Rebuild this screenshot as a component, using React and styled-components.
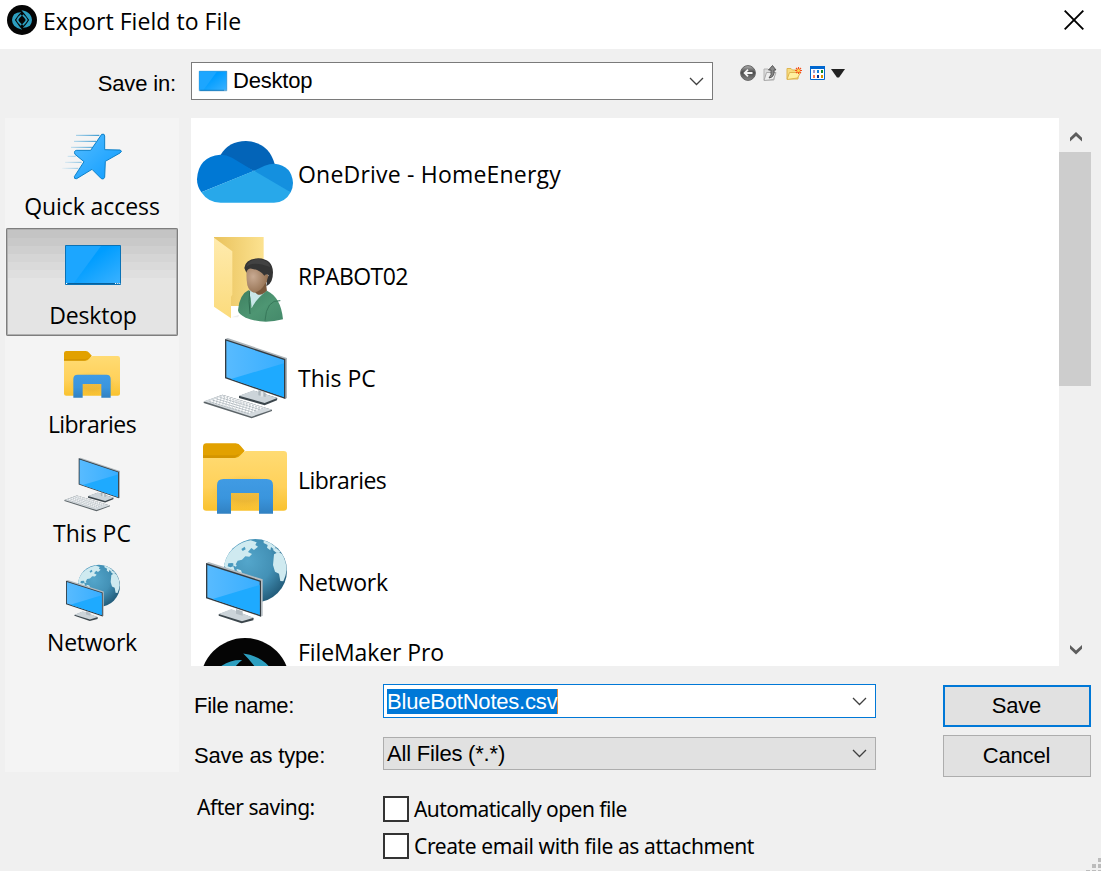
import React from "react";
import styled, { createGlobalStyle, css } from "styled-components";

const GlobalStyle = createGlobalStyle`
  * { box-sizing: border-box; }
  body { margin: 0; background: #f0f0f0; color: #000; }
  svg { display: block; flex: none; overflow: visible; }
`;

const segoe = css`
  font-family: "Open Sans", "Noto Sans", sans-serif;
  font-size: 23px;
  line-height: 32px;
  white-space: nowrap;
`;
const tahoma = css`
  font-family: "Noto Sans", "Open Sans", sans-serif;
  font-size: 21px;
  line-height: 28px;
  white-space: nowrap;
`;
const sans = css`
  font-family: "Liberation Sans", Arial, sans-serif;
  font-size: 22px;
  line-height: 26px;
  white-space: nowrap;
`;

const Dialog = styled.div`
  width: 1101px;
  height: 871px;
  display: flex;
  flex-direction: column;
  background: #f0f0f0;
  overflow: hidden;
`;
const TitleBar = styled.header`
  height: 49px;
  flex: none;
  display: flex;
  align-items: flex-start;
  padding: 5px 17px 0 7px;
  background: #fff;
`;
const Title = styled.h1`
  ${segoe}
  flex: 1;
  margin: 0 0 0 6px;
  font-weight: 400;
  letter-spacing: ${(p) => p.$track}px;
`;
const CloseButton = styled.button`
  border: 0;
  padding: 5px 0 0;
  background: none;
`;
const TopRow = styled.div`
  height: 69px;
  flex: none;
  display: flex;
  align-items: flex-start;
  padding-top: 13px;
`;
const SaveInLabel = styled.label`
  ${sans}
  width: 191px;
  padding: 9px 15px 0 0;
  text-align: right;
  letter-spacing: ${(p) => p.$track}px;
`;
const Combo = styled.div`
  ${sans}
  display: flex;
  align-items: center;
  width: ${(p) => p.$width}px;
  height: ${(p) => p.$height}px;
  padding: 0 8px 0 ${(p) => p.$inset}px;
  border: 1px solid ${(p) => p.$border};
  background: ${(p) => p.$fill || "#fff"};
`;
const ComboText = styled.span`
  flex: 1;
  margin-left: ${(p) => p.$gap || 0}px;
  letter-spacing: ${(p) => p.$track || 0}px;
`;
const Selected = styled.span`
  display: block;
  width: max-content;
  height: 25px;
  line-height: 26px;
  background: #0078d7;
  color: #fff;
  border-right: 1px solid #e08a3c;
`;
const Toolbar = styled.div`
  display: flex;
  align-items: center;
  gap: 7px;
  margin: 3px 0 0 27px;
`;
const Content = styled.div`
  flex: 1;
  display: flex;
  gap: 12px;
  padding: 0 10px 0 5px;
`;
const Places = styled.nav`
  width: 174px;
  height: 654px;
  padding: 1px 1px 0;
  background: #f4f4f4;
`;
const Place = styled.button`
  ${segoe}
  width: 172px;
  height: ${(p) => (p.$active ? 108 : 109)}px;
  margin-bottom: ${(p) => (p.$active ? 1 : 0)}px;
  display: flex;
  flex-direction: column;
  align-items: center;
  padding: 9px 0 0;
  border: 0;
  background: none;
  color: #000;
  letter-spacing: ${(p) => p.$track}px;
  ${(p) =>
    p.$active &&
    css`
      background: linear-gradient(
        #c4c4c4 10px, #c9c9c9 10px 18px, #cfcfcf 18px 26px, #d5d5d5 26px 34px,
        #dadada 34px 42px, #dfdfdf 42px 50px, #e4e4e4 50px
      );
      box-shadow: inset 0 0 0 1px #7e7e7e, inset 0 0 0 2px #b0b0b0;
      border-radius: 2px;
    `}
`;
const PlaceLabel = styled.span`
  margin-top: 6px;
  padding-left: ${(p) => (p.$active ? 2 : 0)}px;
`;
const Main = styled.main`
  width: 900px;
  display: flex;
  flex-direction: column;
`;
const Browser = styled.section`
  display: flex;
  height: 548px;
`;
const FileList = styled.ul`
  flex: 1;
  height: 548px;
  margin: 0;
  padding: 6px 0 0 6px;
  list-style: none;
  background: #fff;
  overflow: hidden;
`;
const FileRow = styled.li`
  ${segoe}
  display: flex;
  align-items: ${(p) => (p.$top ? "flex-start" : "center")};
  height: 96px;
  margin-bottom: 6px;
  gap: 5px;
  letter-spacing: ${(p) => p.$track}px;
`;
const FileName = styled.span`
  padding-top: ${(p) => (p.$top ? 5 : 4)}px;
  line-height: ${(p) => (p.$top ? 26 : 32)}px;
`;
const Scrollbar = styled.div`
  width: 32px;
  display: flex;
  flex-direction: column;
  background: #f0f0f0;
`;
const ScrollButton = styled.div`
  width: 32px;
  height: 34px;
  display: flex;
  align-items: center;
  justify-content: center;
  padding: ${(p) => p.$shift || 0}px 0 0 1px;
`;
const ScrollThumb = styled.div`
  width: 32px;
  height: 234px;
  margin-bottom: auto;
  background: #cdcdcd;
`;
const Form = styled.form`
  display: flex;
  justify-content: space-between;
  padding-top: 18px;
`;
const Fields = styled.div`
  display: flex;
  flex-direction: column;
`;
const Field = styled.div`
  display: flex;
  align-items: flex-start;
  margin-bottom: ${(p) => p.$after}px;
`;
const FieldLabel = styled.label`
  ${(p) => (p.$soft ? tahoma : sans)}
  width: 192px;
  padding: ${(p) => p.$drop}px 0 0 ${(p) => (p.$soft ? 6 : 3)}px;
  letter-spacing: ${(p) => p.$track}px;
`;
const SoftLabel = styled(FieldLabel)`
  margin-top: -3px;
`;
const Options = styled.div`
  display: flex;
  flex-direction: column;
  gap: 11px;
`;
const Option = styled.label`
  ${tahoma}
  height: 26px;
  display: flex;
  align-items: center;
  gap: 5px;
  letter-spacing: ${(p) => p.$track}px;
`;
const Check = styled.span`
  width: 26px;
  height: 26px;
  border: 2px solid #333;
  background: #fff;
`;
const Actions = styled.div`
  display: flex;
  flex-direction: column;
  gap: 8px;
  padding-top: 1px;
`;
const ActionButton = styled.button`
  ${sans}
  width: 148px;
  height: 42px;
  padding: 0 1px 0 0;
  border: ${(p) => (p.$primary ? "2px solid #0078d7" : "1px solid #adadad")};
  background: #e1e1e1;
  color: #000;
  letter-spacing: -0.2px;
`;
const Grip = styled.div`
  position: absolute;
  left: 1086px;
  top: 858px;
`;

const Chevron = () => (
  <svg width="15" height="9" viewBox="0 0 15 9">
    <path d="M1 1l6.5 6.5L14 1" fill="none" stroke="#404040" strokeWidth="1.3" />
  </svg>
);

const ScrollArrow = ({ down }) => (
  <svg width="12" height="10" viewBox="0 0 12 10">
    <path d={down ? "M0 0l6 5.5L12 0v3.8L6 9.6 0 3.8z" : "M0 9.6L6 4l6 5.6V5.8L6 0 0 5.8z"} fill="#5d5d5d" />
  </svg>
);

const Icon = ({ y, compact, children }) => (
  <svg
    width={compact ? 56 : 96}
    height={compact ? 56 : 96}
    viewBox={compact ? `39 ${y + 18} 252 252` : `21 ${y} 288 288`}
  >
    {children}
  </svg>
);

const LogoMark = () => (
  <>
    <circle r="126" fill="#050505" />
    <g fill="#2d9fc0">
      <path d="M-66-48Q-38-66-8-64Q-26-52-60 0Q-26 52 2 82Q-38 76-66 48Q-84 24-84 0Q-84-24-66-48z" />
      <path d="M-5-82Q40-76 66-48Q84-24 84 0Q84 24 66 48Q38 66 8 64Q26 52 60 0Q26-52-5-82z" />
    </g>
    <path d="M-6-42Q-26-26-40 0Q-26 26-6 42M6-42Q26-26 40 0Q26 26 6 42" fill="none" stroke="#2d9fc0" strokeWidth="14" />
  </>
);

const FileMakerIcon = () => (
  <Icon y={327}>
    <g transform="translate(165 473) scale(1.063)">
      <LogoMark />
    </g>
  </Icon>
);

const OneDriveIcon = () => (
  <Icon y={12}>
    <path d="M91 106Q116 63 168 63Q236 66 254 132L192 153L120 120z" fill="#0364b8" />
    <path d="M34 217Q21 200 21 178Q24 110 91 104Q110 104 126 113L192 153z" fill="#0078d4" />
    <path d="M192 152L224 137Q238 131 254 131Q306 137 309 189Q309 203 302 217L240 200z" fill="#1490df" />
    <path d="M192 152L302 217Q286 248 252 248H92Q54 248 34 217z" fill="#28a8ea" />
  </Icon>
);

const UserFolderIcon = () => (
  <Icon y={318}>
    <defs>
      <linearGradient id="ufBack" x1="0" y1="0" x2="1" y2="0">
        <stop offset="0" stopColor="#e9c25c" />
        <stop offset="1" stopColor="#fce290" />
      </linearGradient>
      <linearGradient id="ufFront" x1="0" y1="0" x2="0" y2="1">
        <stop offset="0" stopColor="#ffebae" />
        <stop offset="1" stopColor="#fbdb7c" />
      </linearGradient>
      <radialGradient id="ufFace" cx=".3" cy=".4" r=".8">
        <stop offset="0" stopColor="#c8aa92" />
        <stop offset="1" stopColor="#8a6544" />
      </radialGradient>
      <linearGradient id="ufCoat" x1="0" y1="0" x2="1" y2="1">
        <stop offset="0" stopColor="#3e8060" />
        <stop offset=".55" stopColor="#4e9673" />
        <stop offset="1" stopColor="#44896a" />
      </linearGradient>
    </defs>
    <path d="M124 592l24-8-4 8z" fill="#eee" />
    <path d="M72 351h149v207H100L72 353z" fill="url(#ufBack)" />
    <path d="M72 353l55 41v130l-4 6v65l-51-35z" fill="url(#ufFront)" />
    <path d="M180 500l47-18 5 40-38 18z" fill="#7a583b" />
    <path d="M178 511l12-3q14 30 40 5l4 10-38 52-22-30z" fill="#c9e6e8" />
    <path d="M176 510l6 25 3 30q14-30 46-53 42 20 48 86-62 16-112-5-22-10-23-22 4-48 32-61z" fill="url(#ufCoat)" />
    <path d="M179 512q-4 30 1 70" fill="none" stroke="#2e6b50" strokeWidth="3" />
    <path d="M271 542q-42-4-46 60" fill="none" stroke="#37785a" strokeWidth="3" />
    <path d="M170 450q5-15 28-12l30 22 8 8q2 16-10 22-12 24-34 28-14-2-20-22-4-22-2-46z" fill="url(#ufFace)" />
    <path d="M163 444q3-28 42-29 43 2 44 42 0 34-20 42 0-18 7-34l-8-2-5 4q-14-18-38-21-12-2-16 12z" fill="#343434" />
    <path d="M168 441q20-20 73 0-4-21-36-24-30 1-37 24z" fill="#424242" />
  </Icon>
);

const ScreenDefs = ({ id }) => (
  <linearGradient id={id} x1="0" y1="0" x2="1" y2="0">
    <stop offset="0" stopColor="#58bbff" />
    <stop offset="1" stopColor="#38aeff" />
  </linearGradient>
);

const PcIcon = ({ compact }) => {
  const id = compact ? "pcS" : "pcL";
  return (
    <Icon y={-6} compact={compact}>
      <defs><ScreenDefs id={id} /></defs>
      <path d="M147 198l44-16 71 22-1 7-37 15-77-22z" fill="#3c464c" />
      <path d="M147 197l44-16 71 23-38 15z" fill="#ccd4d9" />
      <path d="M205 180l22 8v13l-22-5z" fill="#aab4ba" />
      <path d="M212 184h8v16h-8z" fill="#e1e6e9" />
      <path d="M105 27l8-3 178 60v120l-6 3z" fill="#aeb6bb" />
      <path d="M105 27l181 60v120l-181-62z" fill="#343c42" />
      <path d="M109 32l173 58v111l-173-59z" fill={`url(#${id})`} />
      <path d="M282 100v101l-159-54z" fill="#1eaaff" />
      <path d="M41 215l56-21 149 45v4l-61 22L41 219z" fill="#5c6468" />
      <path d="M41 214l56-20 149 45-61 21z" fill="#d4dade" />
      <g fill="none" stroke="#fff" strokeWidth="4" strokeDasharray="7 3">
        <path d="M62 212l119 36M73 208l119 36M84 204l119 36M95 200l119 36M104 200l116 35" />
      </g>
      <g fill="none" stroke="#8a9499" strokeWidth="1.4" strokeDasharray="6 3">
        <path d="M58 215l119 36M69 211l119 36M80 207l119 36M91 203l119 36M100 200l119 36" />
      </g>
    </Icon>
  );
};

const LibrariesIcon = ({ compact }) => {
  const id = compact ? "libS" : "libL";
  return (
    <Icon y={300} compact={compact}>
      <defs>
        <linearGradient id={`${id}a`} x1="0" y1="0" x2="0" y2="1">
          <stop offset="0" stopColor="#ffdb73" />
          <stop offset=".6" stopColor="#ffd15a" />
          <stop offset="1" stopColor="#f9c22f" />
        </linearGradient>
        <linearGradient id={`${id}b`} x1="0" y1="0" x2="0" y2="1">
          <stop offset="0" stopColor="#409be4" />
          <stop offset=".55" stopColor="#3a95dd" />
          <stop offset="1" stopColor="#3181c2" />
        </linearGradient>
        <radialGradient id={`${id}c`}>
          <stop offset=".5" stopColor="#c68d19" stopOpacity=".28" />
          <stop offset="1" stopColor="#e9ad22" stopOpacity="0" />
        </radialGradient>
      </defs>
      <path d="M39 375V350q1-10 10-10h88q10 0 15 8l12 14-20 30H39z" fill="#e2a100" />
      <path d="M39 384h96q10 0 16-8l10-10q3-3 9-3h111q10 0 10 10v160q0 9-10 9H49q-10 0-10-9z" fill={`url(#${id}a)`} />
      <path d="M39 376h98l13-5-12 10q-3 3-9 3H39z" fill="#c98c00" opacity=".55" />
      <ellipse cx="165" cy="487" rx="105" ry="54" fill={`url(#${id}c)`} />
      <path d="M81 551v-85q0-19 19-19h130q19 0 19 19v85h-42v-62h-84v62z" fill={`url(#${id}b)`} />
    </Icon>
  );
};

const NetworkIcon = ({ compact }) => {
  const id = compact ? "netS" : "netL";
  return (
    <Icon y={21} compact={compact}>
      <defs>
        <ScreenDefs id={id} />
        <radialGradient id={`${id}g`} cx=".38" cy=".35" r=".7">
          <stop offset="0" stopColor="#54a6cb" />
          <stop offset=".55" stopColor="#4391b6" />
          <stop offset="1" stopColor="#215a78" />
        </radialGradient>
      </defs>
      <circle cx="196" cy="137" r="95" fill={`url(#${id}g)`} />
      <g fill="#cfeaf0">
        <path d="M102 122q6-35 34-56 18-15 46-20l18 6-4 8 8 5-12 10-8-6-10 12 12 6-8 8-12-1-10 10-13 3-7 13-9-6-12 1-2 9 8 3 9-3 4 12-10 4-12-6z" />
        <path d="M132 116l8 4-2 5-10-4zM141 132l12 4 4 11-8-3-10-9z" />
        <path d="M221 46q20 6 36 20l-4 8-10-8-2 10-10-8 2-8-12-6z" />
        <path d="M252 88l14-7 10 6q13 22 14 48-3 20-10 34l-9-1-4-22-12-6-6-20z" />
        <path d="M248 74l10-5 14 12-12 3z" />
      </g>
      <path d="M154 72l10-7 3 8-9 5z" fill="#4a9bc0" />
      <path d="M86 268l38-14 67 25-1 7-35 9-69-23z" fill="#3c464c" />
      <path d="M86 267l38-15 67 26-35 11z" fill="#ccd4d9" />
      <path d="M138 252l20 7v13l-20-6z" fill="#b3bcc2" />
      <path d="M48 115l8-4 162 52v109l-6 3z" fill="#b4bcc1" />
      <path d="M48 114l165 53v108L48 220z" fill="#343c42" />
      <path d="M52 120l157 50v99L52 217z" fill={`url(#${id})`} />
      <path d="M209 180v89L68 222z" fill="#1eaaff" />
    </Icon>
  );
};

const DesktopIcon = ({ width }) => (
  <svg width={width} height={(width * 40) / 56} viewBox="0 0 56 40">
    <defs>
      <linearGradient id={`desk${width}`} x1="0" y1="0" x2="1" y2="1">
        <stop offset=".4" stopColor="#009dff" />
        <stop offset="1" stopColor="#3cb2ff" />
      </linearGradient>
    </defs>
    <path d="M.5.5h55v39H.5z" fill={`url(#desk${width})`} stroke="#0a72b6" />
    <path d="M1 1h35L9 38H1z" fill="#1ca6ff" />
    <path d="M1 38.5h54" stroke="#06609c" />
    <path d="M1 38.5h1.2M50 38.5h1.2M52.2 38.5h1.2M54.2 38.5h1" stroke="#fff" strokeWidth="1.2" />
  </svg>
);

const DesktopPlaceIcon = styled.div`
  height: 56px;
  display: flex;
  align-items: center;
  padding-left: 2px;
`;

const StarIcon = () => (
  <svg width="56" height="56" viewBox="192 39 168 168">
    <defs>
      <linearGradient id="star" x1="0" y1="0" x2="1" y2="1">
        <stop offset="0" stopColor="#55bdff" />
        <stop offset="1" stopColor="#0c9bff" />
      </linearGradient>
      <linearGradient id="trail" gradientUnits="userSpaceOnUse" x1="190" y1="0" x2="300" y2="0">
        <stop offset="0" stopColor="#2a9ad8" stopOpacity=".1" />
        <stop offset="1" stopColor="#1587c8" />
      </linearGradient>
    </defs>
    <path d="M228 61h70M222 79h66M213 97h65M203 124h24M195 142h50M187 160h48" stroke="url(#trail)" strokeWidth="3" />
    <path
      d="M305 58q9-3 9 5v41l47 1q7 4-1 9l-44 25-2 48q-3 8-10 4l-28-28-46 28q-8 2-7-6l29-45-27-22q-5-11 5-12h42z"
      fill="url(#star)"
      stroke="#0d80c8"
      strokeWidth="3"
      strokeLinejoin="round"
    />
  </svg>
);

const BackIcon = () => (
  <svg width="16" height="16" viewBox="0 0 16 16">
    <defs>
      <linearGradient id="back" x1="0" y1="0" x2="0" y2="1">
        <stop offset="0" stopColor="#b4b4b4" />
        <stop offset=".45" stopColor="#4a4a4a" />
        <stop offset="1" stopColor="#858585" />
      </linearGradient>
    </defs>
    <circle cx="8" cy="8" r="7.4" fill="url(#back)" stroke="#666" />
    <path d="M12.5 8H5M8 4.6L4.6 8 8 11.4" fill="none" stroke="#f4f4f4" strokeWidth="1.8" />
  </svg>
);
const UpIcon = () => (
  <svg width="16" height="16" viewBox="1 0 16 16">
    <path d="M2 4h4l1 1h5v10H2z" fill="#dcdcdc" stroke="#b4b4b4" />
    <path d="M2 15.500l2.500-8H14l-2.500 7z" fill="#eee" stroke="#aaa" />
    <path d="M7 13q3-3 2-8H6.500l4-4.500L14 5h-2q1 7-5 8z" fill="#888" stroke="#444" strokeWidth=".8" />
  </svg>
);
const NewFolderIcon = () => (
  <svg width="16" height="16" viewBox="0 0 16 16">
    <path d="M1 14V3.500h4l1.500 1.500H12V14z" fill="#f7dc80" stroke="#dfb550" />
    <path d="M1 14.500l2.500-7H14.500l-3 5.500z" fill="#fff0a0" stroke="#dfb550" />
    <path d="M12.500 2v7M9 5.500h7M10 3l5 5M15 3l-5 5" stroke="#f4511e" strokeWidth="1.100" />
    <circle cx="12.500" cy="5.500" r="1.500" fill="#ffd54a" />
  </svg>
);
const ViewIcon = () => (
  <svg width="16" height="14" viewBox="-1 0 16 14">
    <path d="M.5.5h14v13H.5z" fill="#fff" stroke="#0067d0" />
    <path d="M0 0h15v3H0z" fill="#0067d0" />
    <path d="M3 4h2v3H3z" fill="#9b9bd0" />
    <path d="M7 4h2v3H7z" fill="#1683dd" />
    <path d="M11 4h2v3h-2z" fill="#128a28" />
    <path d="M3 9h2v3H3z" fill="#ff7a50" />
    <path d="M7 9h2v3H7z" fill="#0a3192" />
    <path d="M11 9h2v3h-2z" fill="#d59000" />
  </svg>
);
const MenuArrow = () => (
  <svg width="14" height="9" viewBox="1 0 14 9">
    <path d="M0 0h14L8 8.500H6z" fill="#222" />
  </svg>
);

const places = [
  { label: "Quick access", icon: <StarIcon />, track: -0.08 },
  { label: "Desktop", icon: <DesktopPlaceIcon><DesktopIcon width={56} /></DesktopPlaceIcon>, track: -0.2, active: true },
  { label: "Libraries", icon: <LibrariesIcon compact />, track: -0.55 },
  { label: "This PC", icon: <PcIcon compact />, track: 0 },
  { label: "Network", icon: <NetworkIcon compact />, track: -0.25 },
];
const files = [
  { label: "OneDrive - HomeEnergy", icon: <OneDriveIcon />, track: 0.2 },
  { label: "RPABOT02", icon: <UserFolderIcon />, track: -0.55 },
  { label: "This PC", icon: <PcIcon />, track: 0 },
  { label: "Libraries", icon: <LibrariesIcon />, track: -0.55 },
  { label: "Network", icon: <NetworkIcon />, track: -0.25 },
  { label: "FileMaker Pro", icon: <FileMakerIcon />, track: -0.1, top: true },
];

export default function App() {
  return (
    <Dialog>
      <GlobalStyle />
      <TitleBar>
        <svg width="30" height="30" viewBox="-126 -126 252 252"><LogoMark /></svg>
        <Title $track={0.05}>Export Field to File</Title>
        <CloseButton aria-label="Close">
          <svg width="20" height="20" viewBox="0 0 20 20">
            <path d="M.7.700l18.600 18.600M19.300.700L.7 19.300" stroke="#000" strokeWidth="1.900" />
          </svg>
        </CloseButton>
      </TitleBar>
      <TopRow>
        <SaveInLabel $track={-0.15}>Save in:</SaveInLabel>
        <Combo $width={522} $height={38} $inset={7} $border="#7a7a7a">
          <DesktopIcon width={28} />
          <ComboText $gap={6} $track={-0.2}>Desktop</ComboText>
          <Chevron />
        </Combo>
        <Toolbar>
          <BackIcon />
          <UpIcon />
          <NewFolderIcon />
          <ViewIcon />
          <MenuArrow />
        </Toolbar>
      </TopRow>
      <Content>
        <Places>
          {places.map((p) => (
            <Place key={p.label} $active={p.active} $track={p.track}>
              {p.icon}
              <PlaceLabel $active={p.active}>{p.label}</PlaceLabel>
            </Place>
          ))}
        </Places>
        <Main>
          <Browser>
            <FileList>
              {files.map((f) => (
                <FileRow key={f.label} $top={f.top} $track={f.track}>
                  {f.icon}
                  <FileName $top={f.top}>{f.label}</FileName>
                </FileRow>
              ))}
            </FileList>
            <Scrollbar>
              <ScrollButton $shift={3}><ScrollArrow /></ScrollButton>
              <ScrollThumb />
              <ScrollButton $shift={2}><ScrollArrow down /></ScrollButton>
            </Scrollbar>
          </Browser>
          <Form>
            <Fields>
              <Field $after={18}>
                <FieldLabel $drop={9} $track={-0.25}>File name:</FieldLabel>
                <Combo $width={493} $height={34} $inset={3} $border="#0078d7">
                  <ComboText $track={-0.2}><Selected>BlueBotNotes.csv</Selected></ComboText>
                  <Chevron />
                </Combo>
              </Field>
              <Field $after={26}>
                <FieldLabel $drop={6} $track={-0.17}>Save as type:</FieldLabel>
                <Combo $width={493} $height={33} $inset={3} $border="#adadad" $fill="#e1e1e1">
                  <ComboText $track={-0.2}>All Files (*.*)</ComboText>
                  <Chevron />
                </Combo>
              </Field>
              <Field $after={0}>
                <SoftLabel $soft $drop={0} $track={-0.45}>After saving:</SoftLabel>
                <Options>
                  <Option $track={-0.56}><Check />Automatically open file</Option>
                  <Option $track={-0.39}><Check />Create email with file as attachment</Option>
                </Options>
              </Field>
            </Fields>
            <Actions>
              <ActionButton type="button" $primary>Save</ActionButton>
              <ActionButton type="button">Cancel</ActionButton>
            </Actions>
          </Form>
        </Main>
      </Content>
      <Grip>
        <svg width="15" height="13" viewBox="0 0 15 13">
          <path d="M12 0h3v4h-3zM6 6h4v4H6zM12 6h3v4h-3zM0 12h4v1H0zM6 12h4v1H6zM12 12h3v1h-3z" fill="#bcbcbc" />
        </svg>
      </Grip>
    </Dialog>
  );
}
